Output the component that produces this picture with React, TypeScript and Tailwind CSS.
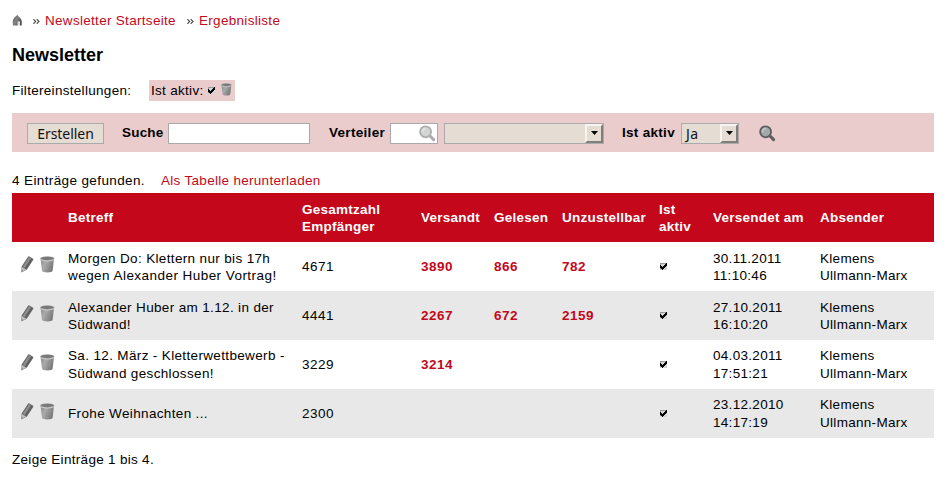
import React from "react";

function HomeIcon() {
  return (
    <svg className="mb-[2px] block h-[11px] w-[10px]" viewBox="0 0 10 11">
      <defs>
        <linearGradient id="home" x1="0" y1="0" x2="1" y2="0.6">
          <stop offset="0" stopColor="#4c4c4c" />
          <stop offset="0.5" stopColor="#858585" />
          <stop offset="1" stopColor="#4a4a4a" />
        </linearGradient>
      </defs>
      <path d="M5.2 0 Q1 3.6 0.8 6 V10.4 H5.8 V6.6 H7.8 V10.4 H9.7 V6 Q9.4 3.6 5.2 0 Z" fill="url(#home)" />
      <path d="M5.8 6.8 H7.8 V10.4 H5.8 Z" fill="#dedede" />
    </svg>
  );
}

function Chevrons() {
  return (
    <svg className="block h-[5px] w-[7px]" viewBox="0 0 7 5" fill="none" stroke="#444" strokeWidth="1.1">
      <path d="M0.4 0.2 L2.7 2.5 L0.4 4.8 M3.7 0.2 L6 2.5 L3.7 4.8" />
    </svg>
  );
}

function Check() {
  return (
    <svg className="block h-[7px] w-[7px]" viewBox="0 0 7 7" shapeRendering="crispEdges">
      <rect x="0" y="0" width="7" height="7" fill="#d4d4d4" />
      <path d="M0 0 H6 V1 H1 V6 H0 Z" fill="#999" />
      <path d="M0 2 H1 V3 H2 V4 H3 V3 H4 V2 H5 V1 H6 V0 H7 V3 H6 V4 H5 V5 H4 V6 H3 V7 H2 V6 H1 V5 H0 Z" fill="#000" />
    </svg>
  );
}

function Trash({ className }: { className: string }) {
  return (
    <svg className={className} viewBox="0 0 15 17" preserveAspectRatio="none">
      <defs>
        <linearGradient id="bin" x1="0" y1="0" x2="1" y2="0.4">
          <stop offset="0" stopColor="#8a8a8a" />
          <stop offset="0.4" stopColor="#aaa" />
          <stop offset="1" stopColor="#7a7a7a" />
        </linearGradient>
      </defs>
      <path d="M0.6 3 L2 14.8 Q2.4 16.4 7.3 16.4 Q12.2 16.4 12.6 14.8 L14 3 Z" fill="url(#bin)" />
      <ellipse cx="7.3" cy="2.6" rx="7.2" ry="2.4" fill="#a0a0a0" />
      <ellipse cx="7.3" cy="2.4" rx="6.2" ry="1.5" fill="#777" />
      <path d="M0.6 3.9 Q7.3 6.6 14 3.9" fill="none" stroke="#d0d0d0" strokeWidth="0.9" />
    </svg>
  );
}

function Pencil() {
  return (
    <svg className="block h-[17px] w-[13px]" viewBox="0 0 13 17">
      <path d="M0.6 10.6 L7.2 0.6 Q7.7 0 8.5 0.4 L12.1 2.8 Q12.7 3.3 12.2 4 L5.8 13.8 L0.5 16.2 Z" fill="#6c6c6c" />
      <path d="M1.9 10.9 L8.2 1.2 L9.8 2.2 L3.5 12 Z" fill="#909090" />
      <path d="M4.5 12.8 L10.9 2.9" stroke="#555" strokeWidth="0.9" />
      <path d="M0.8 10.9 L5.5 13.8 L0.8 15.8 Z" fill="#bdbdbd" />
      <path d="M0.7 13.8 L2.4 15 L0.4 16.4 Z" fill="#888" />
    </svg>
  );
}

function Magnifier({ stroke, fill }: { stroke: string; fill: string }) {
  return (
    <svg className="block h-[17px] w-[17px]" viewBox="0 0 17 17">
      <path d="M10.8 10.8 L14.6 14.6" stroke={stroke} strokeWidth="3" strokeLinecap="round" />
      <circle cx="6.6" cy="6.8" r="5.5" fill={fill} stroke={stroke} strokeWidth="1.8" />
      <path d="M3.5 7 A3.4 3.4 0 0 1 7 3.4" stroke="#fff" strokeOpacity="0.35" strokeWidth="1.6" fill="none" />
    </svg>
  );
}

function Select({ value, className }: { value: string; className: string }) {
  return (
    <div className={`flex h-[21px] border border-[#aaa] bg-[#e5dcd3] ${className}`}>
      <span className="flex-1 pl-1 font-['Noto_Sans',sans-serif] text-[14px] leading-[20px] tracking-[0.5px] text-[#111]">{value}</span>
      <span className="flex h-[19px] w-[18px] items-center justify-center border-2 border-t-[#f8f5f1] border-r-[#827d78] border-b-[#827d78] border-l-[#f8f5f1]">
        <svg className="block h-1 w-[7px]" viewBox="0 0 7 4">
          <path d="M0 0 H7 L3.5 4 Z" fill="#000" />
        </svg>
      </span>
    </div>
  );
}

type Row = {
  subject: [string, string?];
  total: string;
  sent: string;
  read: string;
  failed: string;
  date: string;
  time: string;
  lines: string;
};

const tightLines = "leading-[17px] pt-px";
const looseLines = "leading-[17.5px]";

const rows: Row[] = [
  { subject: ["Morgen Do: Klettern nur bis 17h", "wegen Alexander Huber Vortrag!"], total: "4671", sent: "3890", read: "866", failed: "782", date: "30.11.2011", time: "11:10:46", lines: tightLines },
  { subject: ["Alexander Huber am 1.12. in der", "Südwand!"], total: "4441", sent: "2267", read: "672", failed: "2159", date: "27.10.2011", time: "16:10:20", lines: tightLines },
  { subject: ["Sa. 12. März - Kletterwettbewerb -", "Südwand geschlossen!"], total: "3229", sent: "3214", read: "", failed: "", date: "04.03.2011", time: "17:51:21", lines: looseLines },
  { subject: ["Frohe Weihnachten ..."], total: "2300", sent: "", read: "", failed: "", date: "23.12.2010", time: "14:17:19", lines: looseLines },
];

const columns = "grid grid-cols-[56px_234px_119px_73px_68px_97px_54px_107px_114px] items-center h-[49px] whitespace-nowrap";

export default function App() {
  return (
    <div className="h-[478px] w-[948px] overflow-hidden bg-white px-3 pr-[14px] font-['Liberation_Sans',Arial,sans-serif] text-[13.5px] leading-[17.5px] tracking-[0.3px] text-black">
      <nav className="flex h-[42px] items-center whitespace-nowrap text-[#c4071b]">
        <HomeIcon />
        <span className="ml-[11px] mr-[5px]"><Chevrons /></span>
        <a className="w-[131px]">Newsletter Startseite</a>
        <span className="ml-[11px] mr-[5px]"><Chevrons /></span>
        <a>Ergebnisliste</a>
      </nav>

      <h1 className="h-[38px] text-[18px] font-bold leading-[26px] tracking-normal">Newsletter</h1>

      <div className="flex h-[33px] items-start">
        <span className="w-[137px] leading-[21px]">Filtereinstellungen:</span>
        <span className="flex h-[21px] w-[86px] bg-[#ebcccd] pl-[2px] leading-[21px]">
          <span className="w-[57px] whitespace-nowrap">Ist aktiv:</span>
          <span className="mt-[7px]"><Check /></span>
          <Trash className="ml-[6px] mt-[3px] block h-[13px] w-[11px]" />
        </span>
      </div>

      <form className="flex h-[39px] items-center bg-[#ebcccd] pl-[15px] pt-px font-bold">
        <button type="button" className="h-[21px] w-[77px] border border-[#aaa] bg-[#e5dcd3] font-['Noto_Sans',sans-serif] text-[14px] font-normal leading-[19px] tracking-[-0.05px] text-[#111]">
          Erstellen
        </button>
        <label className="ml-[18px] w-[46px] tracking-[0.2px]">Suche</label>
        <input className="h-[21px] w-[142px] border border-[#aaa] bg-white" />
        <label className="ml-[19px] w-[61px]">Verteiler</label>
        <span className="flex h-[21px] w-12 items-center justify-end border border-[#aaa] bg-white pr-px">
          <Magnifier stroke="#acacac" fill="#d2d4d4" />
        </span>
        <Select value="" className="ml-[6px] w-[160px]" />
        <label className="ml-[18px] w-[59px] whitespace-nowrap">Ist aktiv</label>
        <Select value="Ja" className="w-[58px] font-normal" />
        <span className="ml-[20px]"><Magnifier stroke="#5c5c5c" fill="#a3a8aa" /></span>
      </form>

      <div className="flex h-[41px] whitespace-nowrap pt-5">
        <span className="w-[149px] tracking-[0.38px]">4 Einträge gefunden.</span>
        <a className="text-[#c4071b]">Als Tabelle herunterladen</a>
      </div>

      <div>
        <div className={`${columns} bg-[#c4071b] font-bold tracking-[0.25px] text-white`}>
          <span />
          <span>Betreff</span>
          <span className={tightLines}>Gesamtzahl<br />Empfänger</span>
          <span>Versandt</span>
          <span>Gelesen</span>
          <span>Unzustellbar</span>
          <span className={tightLines}>Ist<br />aktiv</span>
          <span>Versendet am</span>
          <span>Absender</span>
        </div>
        {rows.map((row, i) => (
          <div key={row.total} className={`${columns} even:bg-white odd:bg-[#e8e8e8]`}>
            <span className="flex gap-[6px] pb-[5px] pl-[9px]">
              <Pencil />
              <Trash className="block h-[17px] w-[15px]" />
            </span>
            <span className={`tracking-[0.35px] ${row.subject[1] ? row.lines : ""}`}>
              {row.subject[0]}
              {row.subject[1] && (
                <>
                  <br />
                  <span className={i === 0 ? "tracking-[0.45px]" : "tracking-[0.35px]"}>{row.subject[1]}</span>
                </>
              )}
            </span>
            <span className="tracking-[0.5px]">{row.total}</span>
            <span className="font-bold tracking-[0.5px] text-[#c4071b]">{row.sent}</span>
            <span className="font-bold tracking-[0.5px] text-[#c4071b]">{row.read}</span>
            <span className="font-bold tracking-[0.5px] text-[#c4071b]">{row.failed}</span>
            <span className="pl-px"><Check /></span>
            <span className={row.lines}>{row.date}<br />{row.time}</span>
            <span className={row.lines}>Klemens<br />Ullmann-Marx</span>
          </div>
        ))}
      </div>

      <p className="pt-[13px]">Zeige Einträge 1 bis 4.</p>
    </div>
  );
}
